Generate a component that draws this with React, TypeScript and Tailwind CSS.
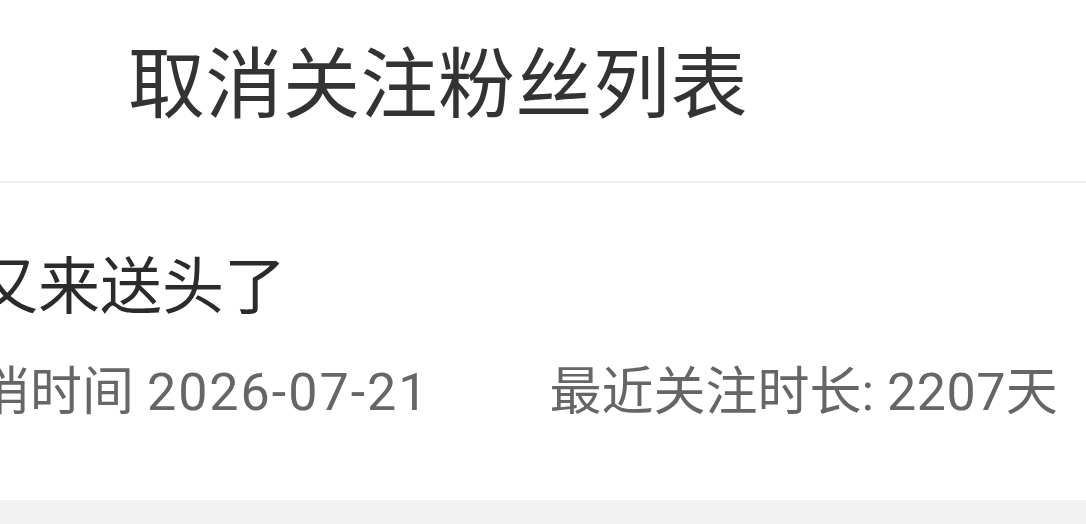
import React from 'react';

const fans = [
  { name: '又来送头了', cancelTime: '2026-07-21', days: 2207 },
];

export default function App() {
  return (
    <div
      className="w-[1086px] h-[524px] overflow-hidden bg-white flex flex-col"
      style={{ fontFamily: 'Roboto, "Noto Sans CJK SC", sans-serif' }}
    >
      <header className="h-[183px] shrink-0 flex items-center pl-[128px] pb-[8px] border-b-2 border-[#efefef]">
        <h1 className="text-[77px] leading-none text-[#333333] tracking-[0.5px]">取消关注粉丝列表</h1>
      </header>

      <ul className="flex-1 flex flex-col">
        {fans.map((fan) => (
          <li key={fan.name} className="h-[315px] pt-[74px] -ml-[24px]">
            <div className="text-[62px] leading-none text-[#2b2b2b]">{fan.name}</div>
            <div className="mt-[48px] -ml-[50px] flex items-center gap-[120px] text-[52px] leading-none text-[#666666]">
              <span>
                取消时间 <span className="tracking-[2px]">{fan.cancelTime}</span>
              </span>
              <span>
                最近关注时长: <span className="tracking-[0.5px]">{fan.days}</span>天
              </span>
            </div>
          </li>
        ))}
      </ul>

      <div className="h-[24px] shrink-0 bg-[#f1f1f1]" />
    </div>
  );
}
